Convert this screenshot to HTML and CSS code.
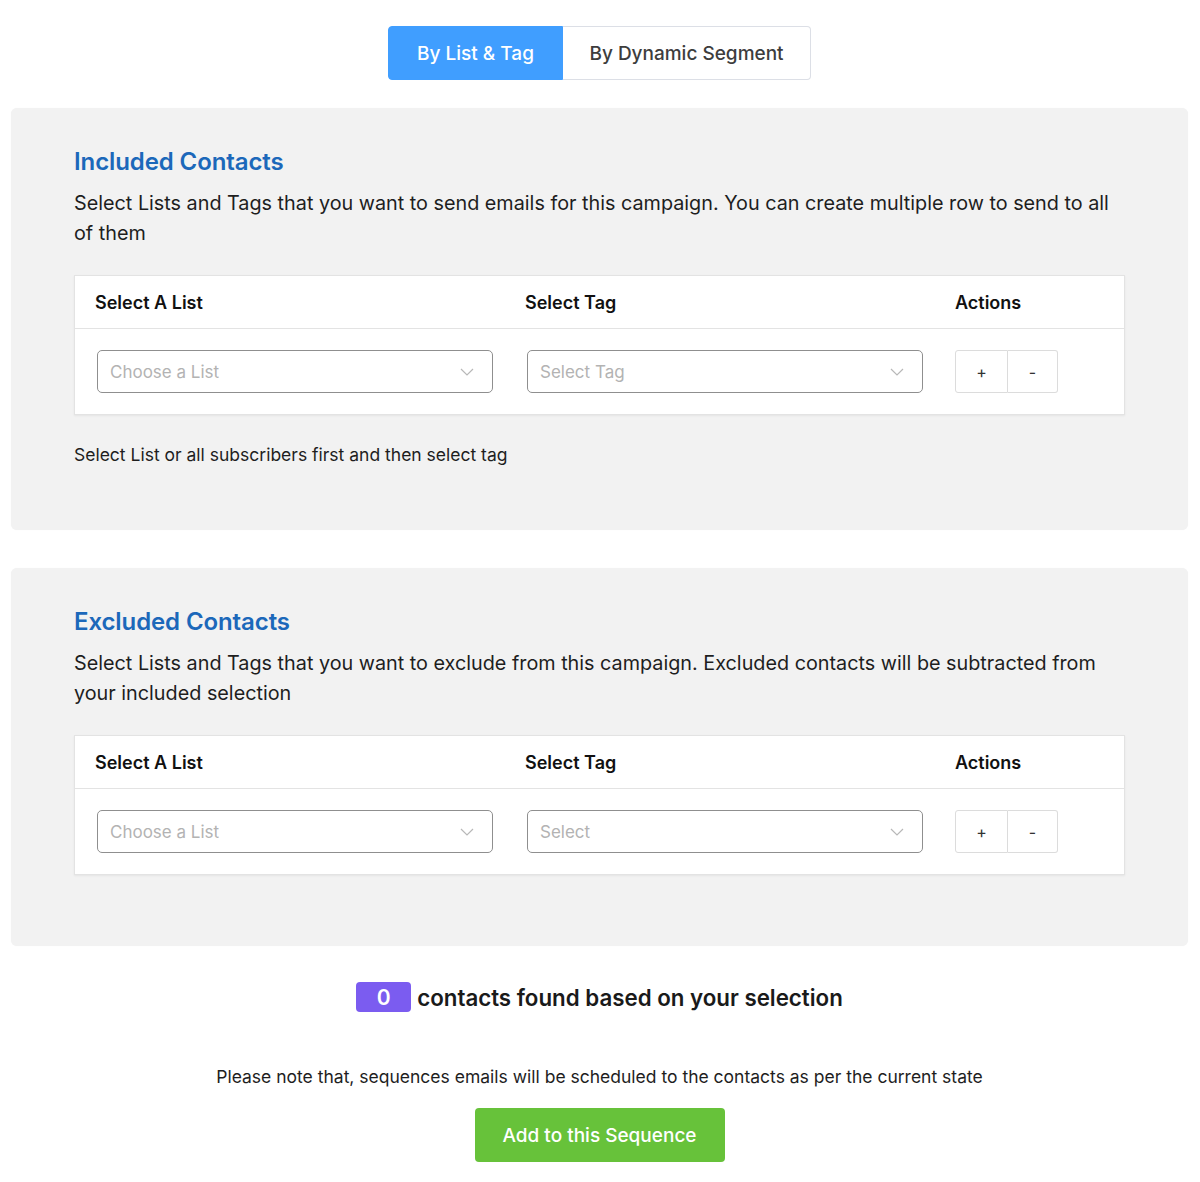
FILE: index.html
```html
<!DOCTYPE html>
<html>
<head>
<meta charset="utf-8">
<link rel="stylesheet" href="styles.css">
</head>
<body>
<div class="page">
  <div class="tabs">
    <button class="tab tab-active">By List &amp; Tag</button>
    <button class="tab">By Dynamic Segment</button>
  </div>

  <section class="panel">
    <h2 class="panel-title">Included Contacts</h2>
    <p class="panel-desc">Select Lists and Tags that you want to send emails for this campaign. You can create multiple row to send to all of them</p>
    <div class="table">
      <div class="row head">
        <div class="cell">Select A List</div>
        <div class="cell">Select Tag</div>
        <div class="cell">Actions</div>
      </div>
      <div class="row body">
        <div class="cell">
          <div class="select"><span>Choose a List</span><svg class="chev" width="14" height="8" viewBox="0 0 14 8"><path d="M1 1l6 6 6-6" fill="none" stroke="#b8b8b8" stroke-width="1.2"/></svg></div>
        </div>
        <div class="cell">
          <div class="select"><span>Select Tag</span><svg class="chev" width="14" height="8" viewBox="0 0 14 8"><path d="M1 1l6 6 6-6" fill="none" stroke="#b8b8b8" stroke-width="1.2"/></svg></div>
        </div>
        <div class="cell">
          <div class="btn-group"><button class="act act-plus">+</button><button class="act act-minus">-</button></div>
        </div>
      </div>
    </div>
    <p class="helper">Select List or all subscribers first and then select tag</p>
  </section>

  <section class="panel panel-ex">
    <h2 class="panel-title">Excluded Contacts</h2>
    <p class="panel-desc">Select Lists and Tags that you want to exclude from this campaign. Excluded contacts will be subtracted from your included selection</p>
    <div class="table">
      <div class="row head">
        <div class="cell">Select A List</div>
        <div class="cell">Select Tag</div>
        <div class="cell">Actions</div>
      </div>
      <div class="row body">
        <div class="cell">
          <div class="select"><span>Choose a List</span><svg class="chev" width="14" height="8" viewBox="0 0 14 8"><path d="M1 1l6 6 6-6" fill="none" stroke="#b8b8b8" stroke-width="1.2"/></svg></div>
        </div>
        <div class="cell">
          <div class="select"><span>Select</span><svg class="chev" width="14" height="8" viewBox="0 0 14 8"><path d="M1 1l6 6 6-6" fill="none" stroke="#b8b8b8" stroke-width="1.2"/></svg></div>
        </div>
        <div class="cell">
          <div class="btn-group"><button class="act act-plus">+</button><button class="act act-minus">-</button></div>
        </div>
      </div>
    </div>
  </section>

  <div class="count">
    <span class="badge">0</span>
    <span class="count-text">contacts found based on your selection</span>
  </div>

  <p class="note">Please note that, sequences emails will be scheduled to the contacts as per the current state</p>
  <div class="submit-wrap">
    <button class="submit">Add to this Sequence</button>
  </div>
</div>
</body>
</html>
```

FILE: styles.css
```css
* { box-sizing: border-box; }

html, body {
  margin: 0;
  padding: 0;
  background: #ffffff;
}

body {
  font-family: Inter, "Noto Sans", "Liberation Sans", sans-serif;
  color: #1e1e1e;
}

.page {
  padding: 26px 12px 20px 11px;
}

.tabs {
  display: flex;
  justify-content: center;
}

.tab {
  font-family: inherit;
  height: 54px;
  width: 248px;
  padding: 0;
  font-size: 19px;
  font-weight: 500;
  color: #3d3d3d;
  background: #ffffff;
  border: 1px solid #dcdfe6;
  border-left: none;
  border-radius: 0 4px 4px 0;
  cursor: pointer;
}

.tab-active {
  width: 175px;
  background: #409eff;
  color: #ffffff;
  border: 1px solid #409eff;
  border-radius: 4px 0 0 4px;
}

.panel {
  margin-top: 28px;
  background: #f2f2f2;
  border-radius: 6px;
  padding: 38px 63px 63px 63px;
  box-shadow: 0 0 1px rgba(0,0,0,0.06);
}

.panel-ex {
  margin-top: 38px;
  padding-bottom: 71px;
}

.panel-title {
  margin: 0;
  font-size: 24px;
  line-height: 32px;
  font-weight: 600;
  color: #1c68ba;
  letter-spacing: -0.1px;
}

.panel-desc {
  margin: 10px 0 0;
  font-size: 19.8px;
  line-height: 30px;
  color: #1e1e1e;
}

.table {
  margin-top: 27px;
  background: #ffffff;
  border: 1px solid #e3e3e3;
  box-shadow: 0 1px 2px rgba(0,0,0,0.06);
}

.row {
  display: grid;
  grid-template-columns: 430px 430px 1fr;
}

.head {
  height: 53px;
  align-items: center;
  border-bottom: 1px solid #e3e3e3;
}

.head .cell {
  padding-left: 20px;
  font-size: 18px;
  font-weight: 600;
  color: #111;
}

.body {
  padding: 21px 0 21px;
}

.body .cell {
  padding: 0 12px 0 22px;
}

.select {
  height: 43px;
  border: 1px solid #8f8f8f;
  border-radius: 5px;
  background: #fff;
  display: flex;
  align-items: center;
  justify-content: space-between;
  padding: 0 18px 0 12px;
  font-size: 17px;
  color: #b3b3b3;
}

.chev { display: block; }

.btn-group {
  display: flex;
  margin-left: -2px;
}

.act {
  font-family: inherit;
  height: 43px;
  background: #fff;
  border: 1px solid #dcdcdc;
  font-size: 16px;
  color: #333;
  padding: 0;
  cursor: pointer;
}

.act-plus { width: 53px; border-radius: 3px 0 0 3px; }
.act-minus { width: 50px; border-left: none; border-radius: 0 3px 3px 0; }

.helper {
  margin: 28px 0 0;
  font-size: 17.5px;
  line-height: 24px;
  color: #1e1e1e;
}

.count {
  margin-top: 36px;
  display: flex;
  justify-content: center;
  align-items: center;
  gap: 6px;
}

.badge {
  display: inline-flex;
  align-items: center;
  justify-content: center;
  width: 55px;
  height: 30px;
  background: #7b5cf0;
  color: #fff;
  border-radius: 4px;
  font-size: 21px;
  font-weight: 600;
}

.count-text {
  font-size: 22.3px;
  font-weight: 600;
  color: #1a1a1a;
}

.note {
  margin: 53px 0 0;
  text-align: center;
  font-size: 17.5px;
  line-height: 24px;
  color: #1e1e1e;
}

.submit-wrap {
  display: flex;
  justify-content: center;
  margin-top: 19px;
}

.submit {
  font-family: inherit;
  width: 250px;
  height: 54px;
  background: #67c23a;
  color: #fff;
  border: none;
  border-radius: 4px;
  font-size: 19px;
  font-weight: 500;
  cursor: pointer;
}
```
